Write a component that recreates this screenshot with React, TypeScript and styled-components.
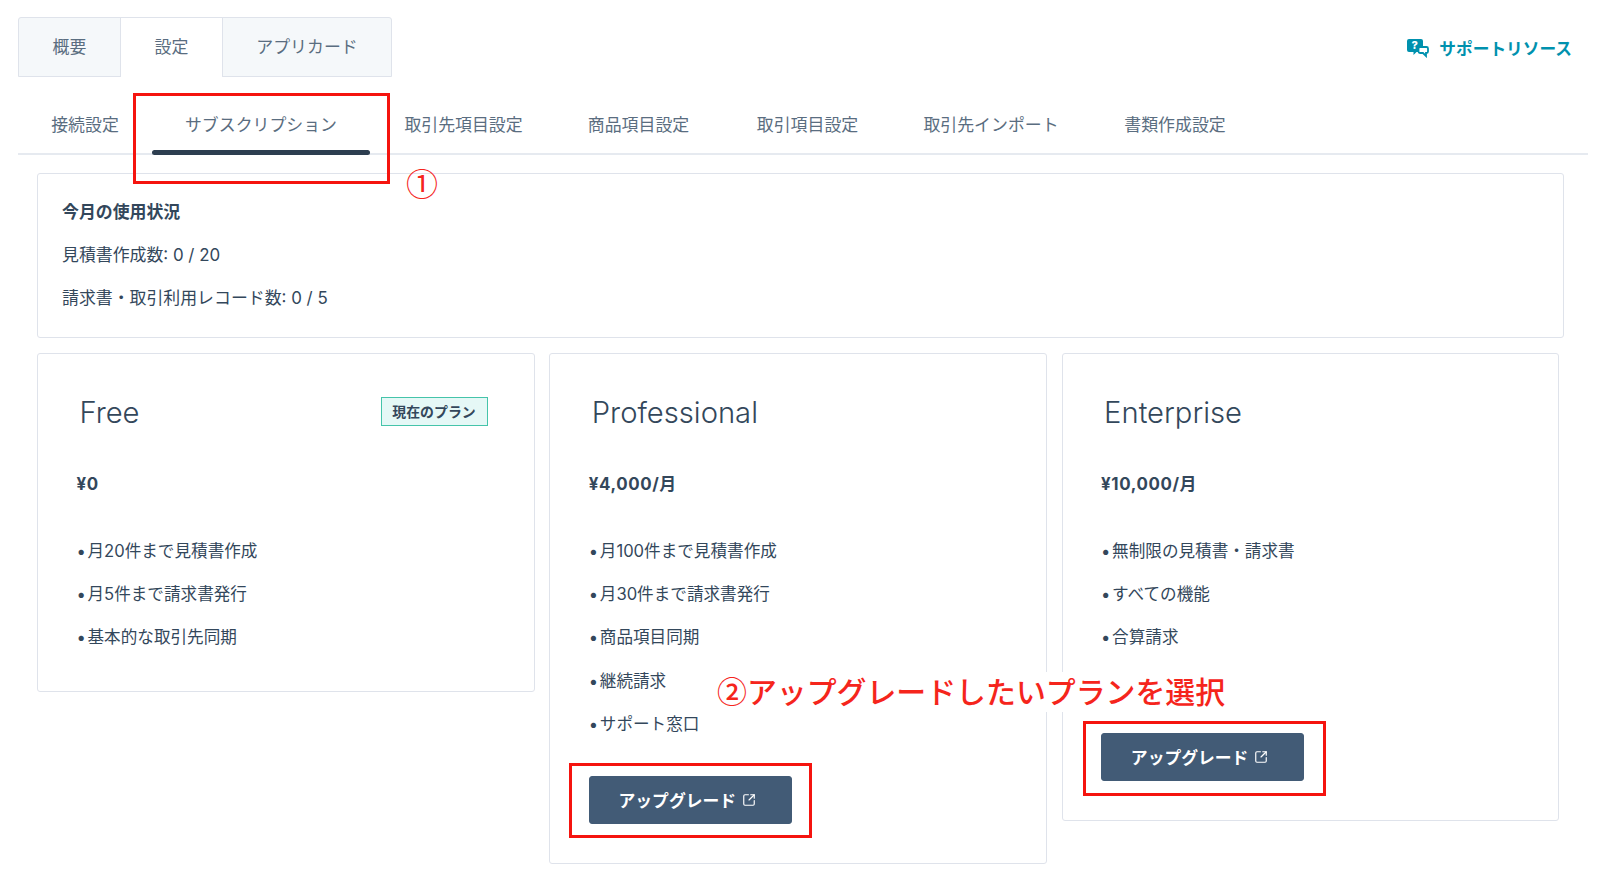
import React from "react";
import styled, { createGlobalStyle } from "styled-components";
import { SquareArrowOutUpRight } from "lucide-react";

const Global = createGlobalStyle`
  html, body { margin: 0; padding: 0; background: #fff; }
  body { font-family: "Inter", "Noto Sans CJK JP", sans-serif; color: #33475b; overflow: hidden; }
  * { box-sizing: border-box; }
`;

const Page = styled.div`
  position: relative;
  width: 1600px;
  height: 881px;
  padding: 17px 12px 0 18px;
  overflow: hidden;
`;
const TopRow = styled.div`
  display: flex;
  justify-content: space-between;
  align-items: center;
  padding-right: 16px;
`;
const Tabs = styled.div`
  display: flex;
  height: 60px;
`;
const Tab = styled.div<{ $w: number; $active?: boolean; $first?: boolean; $last?: boolean }>`
  width: ${(p) => p.$w}px;
  display: flex;
  align-items: center;
  justify-content: center;
  padding-bottom: 4px;
  font-size: 16.9px;
  color: #5a6d80;
  background: ${(p) => (p.$active ? "#fff" : "#f5f8fa")};
  border: 1px solid #dfe3eb;
  border-bottom: ${(p) => (p.$active ? "none" : "1px solid #dfe3eb")};
  border-top-left-radius: ${(p) => (p.$first ? "3px" : 0)};
  border-top-right-radius: ${(p) => (p.$last ? "3px" : 0)};
  margin-left: ${(p) => (p.$first ? 0 : "-1px")};
`;
const Support = styled.div`
  display: flex;
  align-items: center;
  gap: 10px;
  color: #0091ae;
  font-weight: 700;
  font-size: 16.7px;
  margin-top: 2px;
`;
const SubBar = styled.div`
  display: flex;
  height: 78px;
  border-bottom: 2px solid #e6eaf0;
`;
const SubTab = styled.div<{ $w: number; $active?: boolean; $inset?: number }>`
  position: relative;
  width: ${(p) => p.$w}px;
  display: flex;
  justify-content: center;
  padding-top: 34px;
  padding-left: ${(p) => p.$inset ?? 0}px;
  font-size: 16.9px;
  color: #5a6d80;
  ${(p) =>
    p.$active &&
    `&::after {
      content: "";
      position: absolute;
      left: 0;
      right: 0;
      bottom: -2px;
      height: 5px;
      border-radius: 3px;
      background: #2d3e50;
      margin: 0 18px;
    }`}
`;
const Content = styled.div`
  padding: 18px 24px 0 19px;
`;
const Usage = styled.section`
  height: 165px;
  border: 1px solid #dfe3eb;
  border-radius: 3px;
  padding: 27px 24px 0;
  display: flex;
  flex-direction: column;
  gap: 21px;
  font-size: 16.9px;
  line-height: 22px;
`;
const UsageTitle = styled.div`
  font-weight: 700;
`;
const Plans = styled.div`
  display: flex;
  align-items: flex-start;
  gap: 14.8px;
  margin-top: 15px;
`;
const Plan = styled.section<{ $plain?: boolean }>`
  width: 497.5px;
  border: 1px solid #dfe3eb;
  border-radius: 3px;
  padding: 38px 38px ${(p) => (p.$plain ? "43px" : "38.5px")} 38.5px;
`;
const PlanHead = styled.div`
  display: flex;
  align-items: center;
  justify-content: space-between;
  height: 40px;
  padding-left: 3px;
`;
const PlanName = styled.h2`
  margin: 0;
  font-size: 29.2px;
  font-weight: 300;
  color: #33475b;
`;
const Badge = styled.span`
  display: inline-flex;
  align-items: center;
  justify-content: center;
  width: 107px;
  height: 29px;
  border: 1.5px solid #45c4aa;
  background: #e5f8f6;
  margin: 0 8px 2px 0;
  font-size: 13.9px;
  font-weight: 700;
  color: #33475b;
`;
const Price = styled.div`
  margin-top: 41px;
  font-size: 16.9px;
  line-height: 22px;
  font-weight: 700;
  letter-spacing: 0.6px;
`;
const Features = styled.ul`
  list-style: none;
  margin: 45px 0 0;
  padding: 0;
  display: flex;
  flex-direction: column;
  gap: 21.2px;
  font-size: 16.6px;
  line-height: 22px;
  word-spacing: -3px;
`;
const Feature = styled.li`
  min-height: 22px;
`;
const Upgrade = styled.button`
  display: flex;
  align-items: center;
  justify-content: center;
  gap: 6px;
  width: 203px;
  height: 48px;
  margin-top: 41.5px;
  padding: 0 6px 0 0;
  border: 1px solid #425b76;
  border-radius: 3px;
  background: #425b76;
  color: #fff;
  font: 700 16.8px "Inter", "Noto Sans CJK JP", sans-serif;
`;
const RedBox = styled.div<{ $l: number; $t: number; $w: number; $h: number }>`
  position: absolute;
  left: ${(p) => p.$l}px;
  top: ${(p) => p.$t}px;
  width: ${(p) => p.$w}px;
  height: ${(p) => p.$h}px;
  border: 3px solid #f5140f;
`;
const NumberNote = styled.div`
  position: absolute;
  left: 406px;
  top: 160px;
  font-family: "Noto Sans CJK JP", sans-serif;
  font-size: 32px;
  line-height: 44px;
  color: #f5251c;
`;
const SelectNote = styled.div`
  position: absolute;
  left: 712px;
  top: 672px;
  width: 518px;
  height: 40px;
  padding-left: 5px;
  background: #fff;
  font-family: "Noto Sans CJK JP", sans-serif;
  font-size: 29.9px;
  line-height: 36px;
  font-weight: 500;
  color: #f5251c;
  white-space: nowrap;
`;

const HelpIcon = () => (
  <svg width="22" height="20" viewBox="0 0 22 20" aria-hidden="true">
    <path
      fill="#0091ae"
      d="M2 1h12a2 2 0 0 1 2 2v9a2 2 0 0 1-2 2H9.5l-3 3v-3H2a2 2 0 0 1-2-2V3a2 2 0 0 1 2-2z"
    />
    <path
      fill="#fff"
      stroke="#0091ae"
      strokeWidth="1.8"
      d="M13 9h6.5a1.5 1.5 0 0 1 1.5 1.5v3a1.5 1.5 0 0 1-1.5 1.5H19v3l-3-3h-3a1.5 1.5 0 0 1-1.5-1.5v-3A1.5 1.5 0 0 1 13 9z"
    />
    <text x="4.6" y="11" fontSize="11" fontWeight="800" fill="#fff" fontFamily="Inter, sans-serif">
      ?
    </text>
  </svg>
);

const UpgradeButton = () => (
  <Upgrade>
    アップグレード
    <SquareArrowOutUpRight size={14} strokeWidth={2} />
  </Upgrade>
);

const plans = [
  { name: "Free", price: "¥0", current: true, upgrade: false, features: ["• 月20件まで見積書作成", "• 月5件まで請求書発行", "• 基本的な取引先同期"] },
  { name: "Professional", price: "¥4,000/月", current: false, upgrade: true, features: ["• 月100件まで見積書作成", "• 月30件まで請求書発行", "• 商品項目同期", "• 継続請求", "• サポート窓口"] },
  { name: "Enterprise", price: "¥10,000/月", current: false, upgrade: true, features: ["• 無制限の見積書・請求書", "• すべての機能", "• 合算請求", ""] },
];

const subTabs: [string, number, boolean?, number?][] = [
  ["接続設定", 116, false, 18],
  ["サブスクリプション", 254, true],
  ["取引先項目設定", 151],
  ["商品項目設定", 199],
  ["取引項目設定", 139],
  ["取引先インポート", 228],
  ["書類作成設定", 140],
];

export default function App() {
  return (
    <Page>
      <Global />
      <TopRow>
        <Tabs>
          <Tab $w={103} $first>概要</Tab>
          <Tab $w={103} $active>設定</Tab>
          <Tab $w={170} $last>アプリカード</Tab>
        </Tabs>
        <Support>
          <HelpIcon />
          サポートリソース
        </Support>
      </TopRow>
      <SubBar>
        {subTabs.map(([label, w, active, inset]) => (
          <SubTab key={label} $w={w} $active={active} $inset={inset}>
            {label}
          </SubTab>
        ))}
      </SubBar>
      <Content>
        <Usage>
          <UsageTitle>今月の使用状況</UsageTitle>
          <div>見積書作成数: 0 / 20</div>
          <div>請求書・取引利用レコード数: 0 / 5</div>
        </Usage>
        <Plans>
          {plans.map((plan) => (
            <Plan key={plan.name} $plain={!plan.upgrade}>
              <PlanHead>
                <PlanName>{plan.name}</PlanName>
                {plan.current && <Badge>現在のプラン</Badge>}
              </PlanHead>
              <Price>{plan.price}</Price>
              <Features>
                {plan.features.map((f, i) => (
                  <Feature key={i}>{f}</Feature>
                ))}
              </Features>
              {plan.upgrade && <UpgradeButton />}
            </Plan>
          ))}
        </Plans>
      </Content>
      <RedBox $l={133} $t={93} $w={257} $h={91} />
      <NumberNote>①</NumberNote>
      <SelectNote>②アップグレードしたいプランを選択</SelectNote>
      <RedBox $l={569} $t={763} $w={243} $h={75} />
      <RedBox $l={1083} $t={721} $w={243} $h={75} />
    </Page>
  );
}
